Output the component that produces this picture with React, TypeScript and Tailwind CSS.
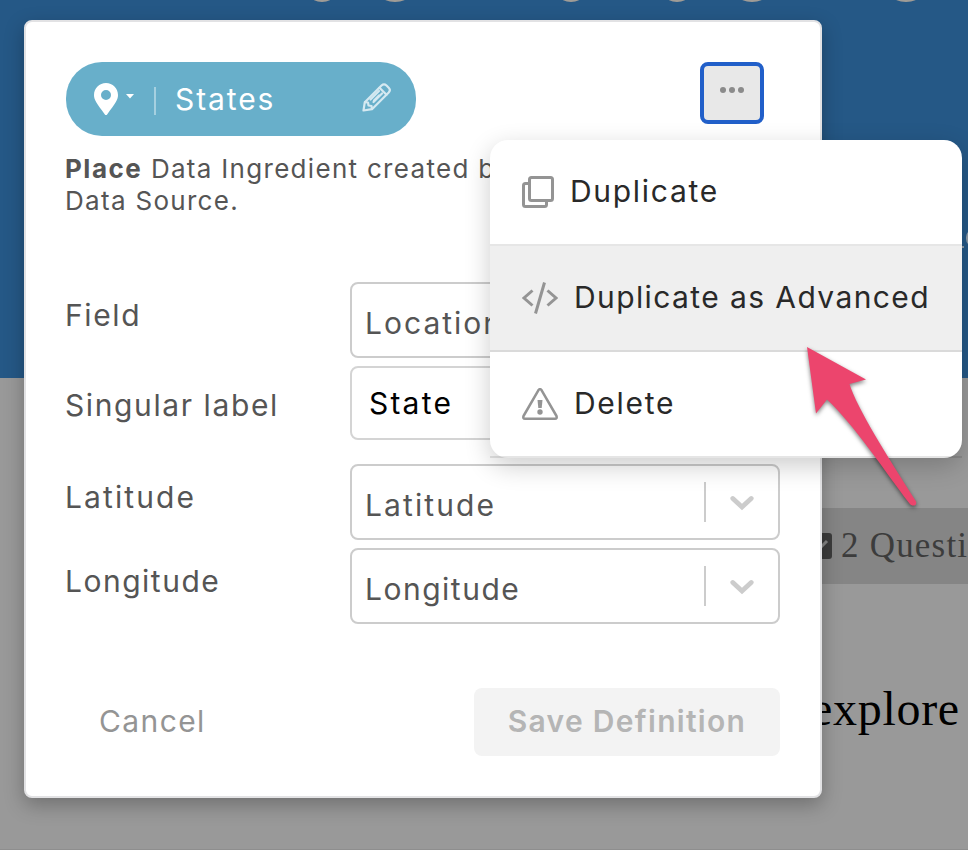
import type { ReactNode } from 'react';

const descenders = [
  'left-[311px] w-[22px]',
  'left-[382px] w-[26px]',
  'left-[560px] w-[22px]',
  'left-[666px] w-[22px]',
  'left-[739px] w-[26px]',
  'left-[893px] w-[26px]',
];

function Backdrop() {
  return (
    <div className="flex h-full flex-col bg-[#999999]">
      <div className="relative h-[378px] overflow-hidden bg-[#255886]">
        {descenders.map((place) => (
          <span key={place} className={`absolute top-[-10px] h-3 rounded-[50%] bg-[#a09c96] ${place}`} />
        ))}
        <span className="absolute left-[966px] top-[230px] h-4 w-3.5 rounded-full border-2 border-[#8d9aa5]" />
        <span className="absolute left-[960px] top-[246px] h-0.5 w-1 bg-[#8d9aa5]" />
      </div>
      <div className="ml-[700px] mt-[130px] flex h-[76px] items-center bg-[#858585] pl-[106px] text-[#3c3c3c]">
        <svg className="shrink-0" width="26" height="26" viewBox="0 0 26 26">
          <rect width="26" height="26" rx="3" fill="#3c3c3c" />
          <path d="M5 13l5 6L21 8" stroke="#858585" strokeWidth="3" fill="none" />
        </svg>
        <span className="ml-[9px] mt-[-2px] whitespace-nowrap font-['Liberation_Serif',serif] text-[35px] leading-none tracking-[1.2px]">2 Questi</span>
      </div>
      <div className="ml-[811px] mt-[100px] whitespace-nowrap font-['Liberation_Serif',serif] text-[48px] leading-[50px] tracking-[0.7px] text-black">explore</div>
      <div className="mt-auto h-px bg-[#8e8e8e]" />
    </div>
  );
}

function Label({ children, className }: { children: ReactNode; className: string }) {
  return <div className={`-ml-px w-[285px] shrink-0 text-[30px] leading-9 text-[#555555] ${className}`}>{children}</div>;
}

function Select({ children, text }: { children: string; text: string }) {
  return (
    <div className="flex h-[76px] w-[430px] items-center rounded-lg border-2 border-[#cccccc] pl-[13px]">
      <span className={`mt-[5px] flex-1 whitespace-nowrap text-[30px] leading-9 text-[#555555] ${text}`}>{children}</span>
      <span className="h-10 w-0.5 bg-[#cccccc]" />
      <svg className="ml-6 mr-6 mt-0.5" width="24" height="16" viewBox="0 0 24 16">
        <path d="M2.800 3.500l9.200 8.500 9.200-8.500" fill="none" stroke="#cccccc" strokeWidth="4.800" strokeLinecap="round" />
      </svg>
    </div>
  );
}

function Modal() {
  return (
    <div className="absolute left-6 top-5 flex h-[778px] w-[798px] flex-col rounded-lg border-2 border-[#e2e2e4] bg-white px-10 pt-10 shadow-[0_7px_20px_rgba(0,0,0,0.27)]">
      <div className="flex items-start justify-between pr-4">
        <div className="flex h-[74px] w-[350px] items-center rounded-[36px] bg-[#68afca] pl-7 pr-[25px] text-white">
          <svg width="24" height="32" viewBox="0 0 24 32">
            <path fillRule="evenodd" d="M12 0C5.400 0 0 5.200 0 12c0 5 2.500 7.800 10.700 19.300a1.600 1.600 0 0 0 2.600 0C21.500 19.800 24 17 24 12 24 5.200 18.600 0 12 0zM12 7a5 5 0 1 1 0 10 5 5 0 0 1 0-10z" fill="white" />
          </svg>
          <svg className="-mt-1.5 ml-2" width="8" height="5" viewBox="0 0 8 5"><path d="M0 0h8L4 4.500z" fill="white" /></svg>
          <span className="ml-[20px] mt-1 h-7 w-0.5 bg-[#a5d0e0]" />
          <span className="ml-[19px] -mt-px flex-1 text-[30px] leading-9 tracking-[1.900px]">States</span>
          <svg className="-mt-[3px]" width="29" height="29" viewBox="0 0 29 29" fill="none" stroke="#d5e9f1" strokeWidth="2.200" strokeLinejoin="round" strokeLinecap="round">
            <path d="M1.500 27.500l1.300-8.300L19.500 2.500Q22 .2 24.500 2.500L26.700 4.700Q29 7 26.700 9.500L10 26.200z" />
            <path d="M3 19.200l3 .3.500 3 3 .5.500 3M17.500 4.800l7 7M20 10.500l-8.500 8.500M17 8L8.500 16.500M12 17.500l5-5" />
          </svg>
        </div>
        <button className="flex h-[62px] w-16 justify-center gap-[3.500px] rounded-lg border-4 border-[#215fc9] bg-[#e8e8e8] pt-[21px]">
          <i className="size-[5.500px] rounded-full bg-[#8b8b8b]" />
          <i className="size-[5.500px] rounded-full bg-[#8b8b8b]" />
          <i className="size-[5.500px] rounded-full bg-[#8b8b8b]" />
        </button>
      </div>
      <p className="-ml-px mt-[17px] whitespace-nowrap text-[26px] leading-8 tracking-[1.3px] text-[#555555]">
        <b className="font-bold tracking-[1.500px]">Place</b> Data Ingredient created by<br />Data Source.
      </p>
      <div className="mt-[65px] flex h-[76px]">
        <Label className="mt-[15px] tracking-[1.6px]">Field</Label>
        <Select text="tracking-[2px]">Location</Select>
      </div>
      <div className="mt-2 flex h-[74px]">
        <Label className="mt-[21px] tracking-[1.6px]">Singular label</Label>
        <div className="flex h-[74px] w-[430px] items-center rounded-lg border-2 border-[#d4d4d4] pl-[17px] pt-px text-[30px] tracking-[2.200px] text-black">State</div>
      </div>
      <div className="mt-6 flex h-[76px]">
        <Label className="mt-[15px] tracking-[2.100px]">Latitude</Label>
        <Select text="tracking-[2.100px]">Latitude</Select>
      </div>
      <div className="mt-2 flex h-[76px]">
        <Label className="mt-[15px] tracking-[1.500px]">Longitude</Label>
        <Select text="tracking-[1.500px]">Longitude</Select>
      </div>
      <div className="mt-16 flex justify-between pl-[33px]">
        <button className="h-[68px] pb-0.5 text-[30px] tracking-[1.400px] text-[#949494]">Cancel</button>
        <button className="h-[68px] w-[306px] rounded-lg bg-[#f3f3f3] pb-0.5 text-[30px] font-semibold tracking-[1.300px] text-[#b5b5b5]">Save Definition</button>
      </div>
    </div>
  );
}

function Menu() {
  return (
    <div className="absolute left-[490px] top-[140px] h-[318px] w-[472px] overflow-visible rounded-[18px] bg-white text-[30px] text-[#292929] shadow-[0_8px_26px_rgba(0,0,0,0.2)]">
      <div className="flex h-[106px] items-center border-b-2 border-[#e6e6e6] pl-8">
        <svg width="32" height="32" viewBox="0 0 32 32" fill="none" stroke="#949494" strokeWidth="3">
          <rect x="7.500" y="1.500" width="23" height="23" rx="2" />
          <path d="M7 7.500H3.500q-2 0-2 2v19q0 2 2 2h19q2 0 2-2V25" />
        </svg>
        <span className="-mt-0.5 ml-4 tracking-[1.700px]">Duplicate</span>
      </div>
      <div className="flex h-[106px] items-center border-b-2 border-[#dadada] bg-[#efefef] pl-8">
        <svg width="36" height="32" viewBox="0 0 36 32" fill="none" stroke="#949494" strokeWidth="3">
          <path d="M10.500 8.500L2 16l8.500 7.500M25.500 8.500L34 16l-8.500 7.500M22.500.5l-9 31" />
        </svg>
        <span className="-mt-0.5 ml-4 whitespace-nowrap tracking-[1.400px]">Duplicate as Advanced</span>
      </div>
      <div className="flex h-[106px] items-center border-b-2 border-black/10 pl-8">
        <svg width="36" height="32" viewBox="0 0 36 32" fill="none" stroke="#949494" strokeWidth="2.500" strokeLinejoin="round">
          <path d="M16.500 2.100q1.500-2 3 0L34.500 28q.8 2.700-1.500 2.700H3Q.7 30.700 1.500 28z" />
          <path d="M15.500 12h5l-.8 8h-3.400z" fill="#949494" stroke="none" />
          <circle cx="18" cy="24" r="2.700" fill="#949494" stroke="none" />
        </svg>
        <span className="-mt-0.5 ml-4 tracking-[1.700px]">Delete</span>
      </div>
    </div>
  );
}

export default function App() {
  return (
    <div className="relative h-[850px] w-[968px] overflow-hidden font-['Inter',sans-serif]">
      <Backdrop />
      <Modal />
      <Menu />
      <svg className="absolute left-[790px] top-[330px] drop-shadow-[0_2px_2px_rgba(0,0,0,0.5)]" width="140" height="190" viewBox="0 0 140 190">
        <path d="M17 17L76 49.500 59.500 54C67 78 96 124 126 171.500 127.500 176 122 177 119.500 173.500 91 136 65 96 37 69.500L26 83.500z" fill="#ec456d" />
      </svg>
    </div>
  );
}
